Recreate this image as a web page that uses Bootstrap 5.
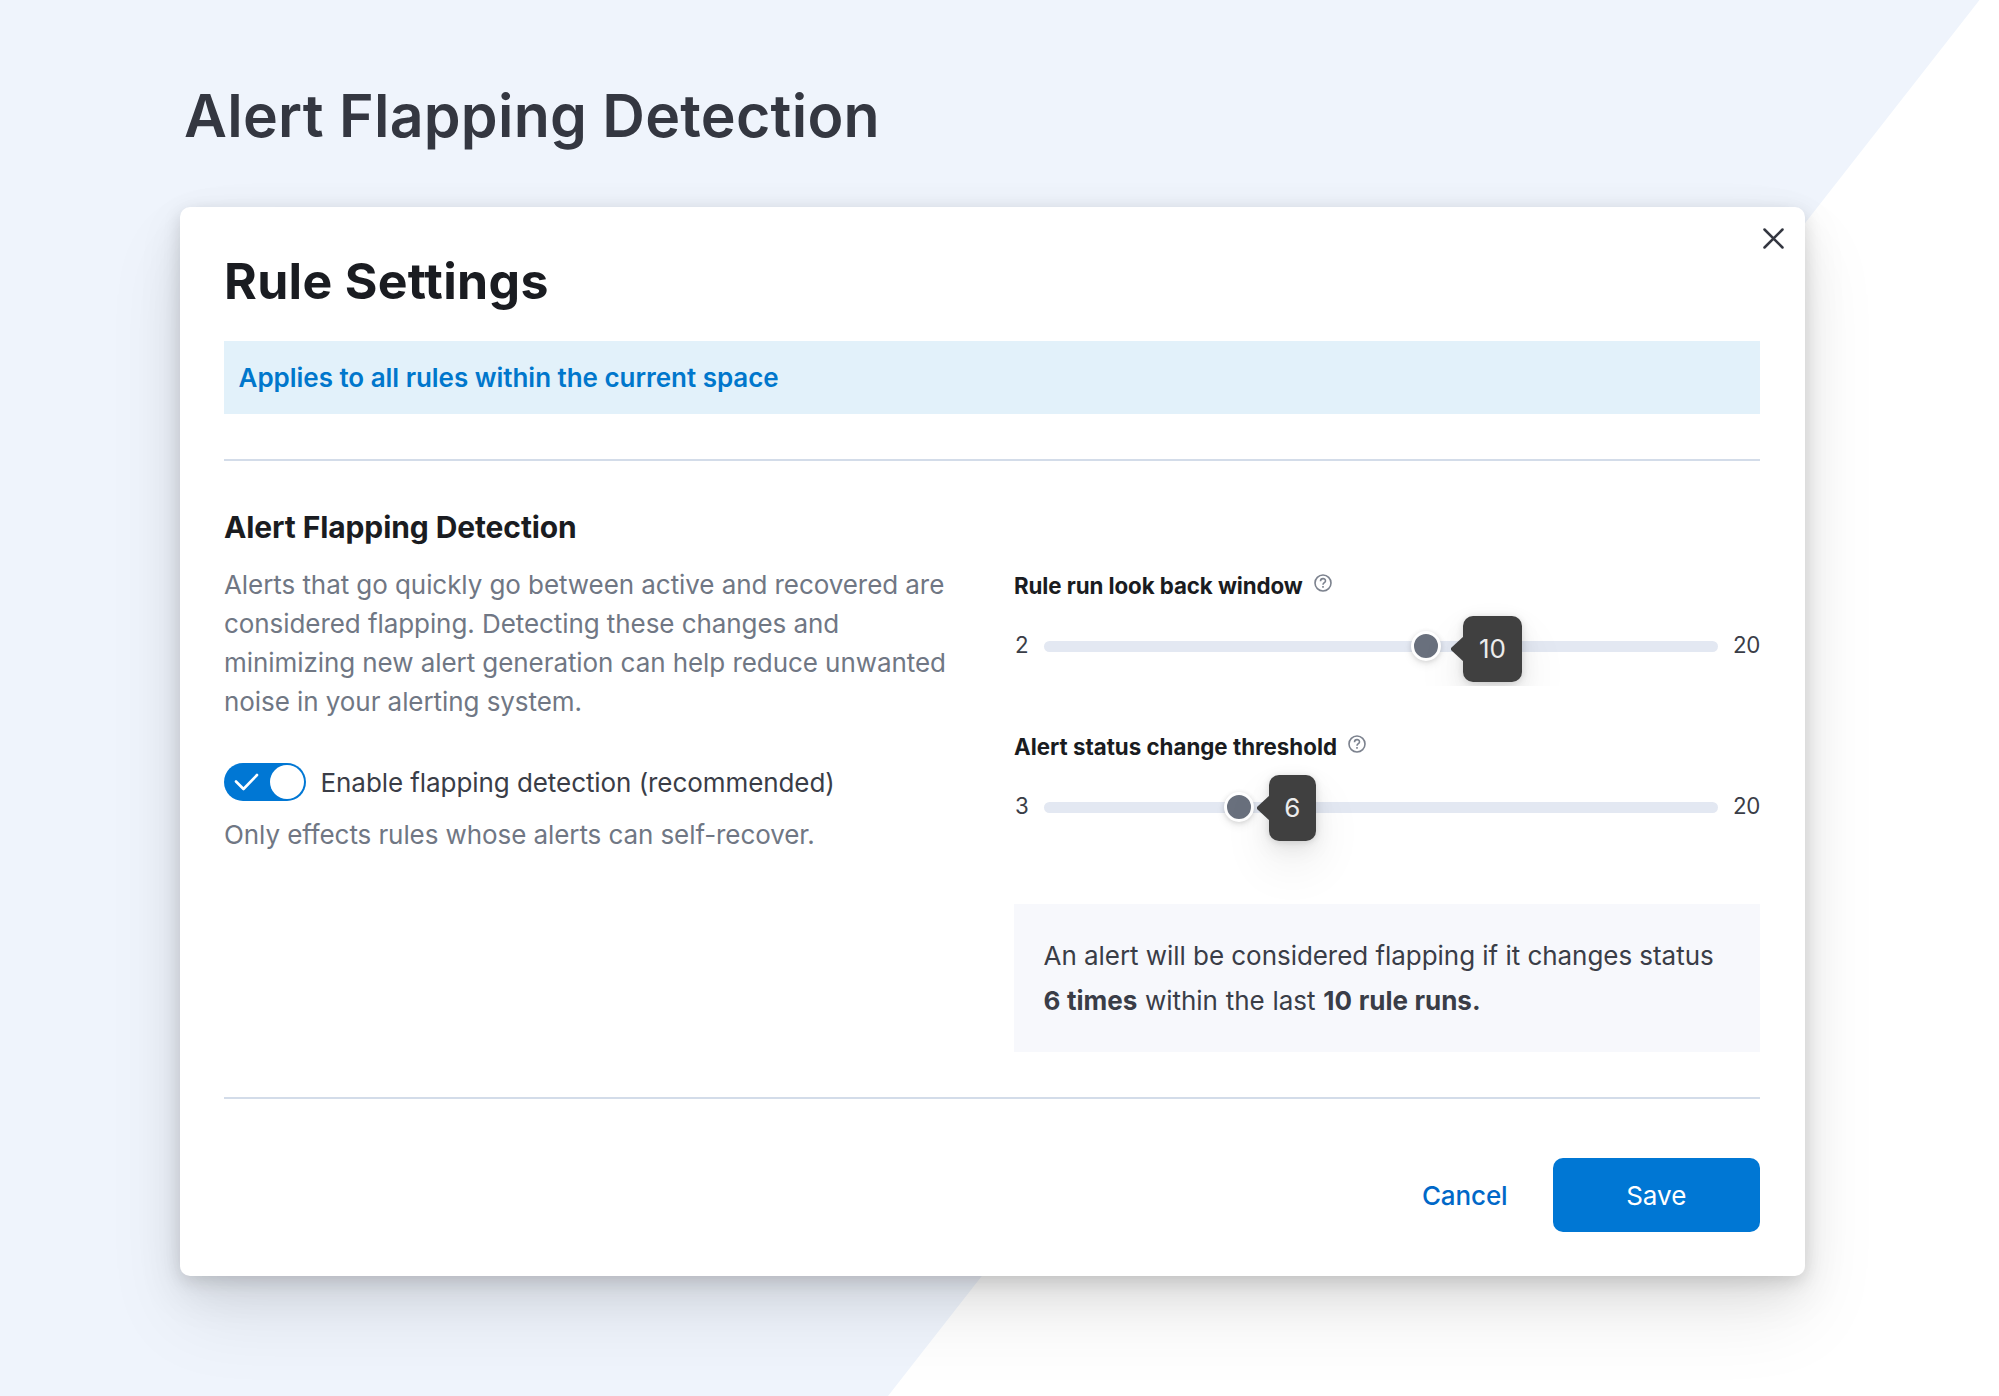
<!DOCTYPE html>
<html lang="en">
<head>
<meta charset="utf-8">
<meta name="viewport" content="width=device-width, initial-scale=1">
<title>Alert Flapping Detection</title>
<link href="https://cdn.jsdelivr.net/npm/bootstrap@5.3.0/dist/css/bootstrap.min.css" rel="stylesheet">
<style>
  body { font-family: Inter, "Liberation Sans", sans-serif; font-size: 26px; line-height: 39px; color: #3a3d47; background: #fff; }
  .backdrop { height: 1396px; padding: 80px 194.5px 0 179.5px; overflow: hidden; position: relative; isolation: isolate; }
  .backdrop::before { content: ""; position: absolute; inset: 0; z-index: -1; background: #eff4fc; clip-path: polygon(0 0, 1979.5px 0, 888px 100%, 0 100%); }
  .page-title { font-size: 59px; font-weight: 600; line-height: 72px; letter-spacing: .26px; margin: 0 0 55px 4.5px; color: #343741; }
  .modal-card { height: 1069px; padding: 44px 44.5px 0 44.500px; border: 0; border-radius: 10px;
    box-shadow: 0 5px 17px rgba(0,0,0,.13), 0 17px 45px rgba(0,0,0,.09), 0 40px 80px rgba(0,0,0,.08); }
  .close-btn { position: absolute; top: 21px; right: 21px; width: 21px; height: 21px; padding: 0; border: 0; background: none; line-height: 0; }
  .modal-heading { font-size: 50px; font-weight: 700; line-height: 61px; letter-spacing: .3px; margin: 0 0 28.500px; color: #1a1c21; }
  .space-banner { height: 73.500px; padding: 0 14.500px; margin-bottom: 45px; background: #e2f1fa; color: #0077cc; font-weight: 600; letter-spacing: -.03px; }
  .rule-line { height: 2px; background: #d3dce9; }
  .left-col { width: 745px; padding-top: 48px; letter-spacing: -.07px; }
  .right-col { width: 746px; }
  .section-title { font-size: 30px; font-weight: 700; line-height: 36px; letter-spacing: -.1px; margin: 0 0 20px; color: #1a1c21; }
  .subdued { color: #707784; }
  .toggle-line { margin-top: 41.500px; }
  .toggle { width: 81.5px; height: 38px; border-radius: 19px; background: #0077d4; padding: 2px 2px; margin-right: 15px; }
  .toggle-knob { width: 34px; height: 34px; border-radius: 50%; background: #fff; }
  .toggle-note { margin: 13px 0 0; letter-spacing: -.085px; }
  .field { position: relative; background: #fff; }
  .field-one { padding-top: 107.5px; height: 225px; }
  .field-two { padding-top: 43.5px; height: 218px; }
  .field-label { font-size: 22.3px; font-weight: 700; line-height: 34px; color: #1a1c21; margin-bottom: 27px; }
  .field-one .field-label { letter-spacing: -.08px; }
  .field-label svg { margin: -6px 0 0 11px; }
  .slider-row { height: 34px; font-size: 22.3px; line-height: 30px; }
  .slider-row > span { height: 34px; }
  .min-val { width: 29.500px; padding-left: 1px; }
  .max-val { width: 42px; text-align: right; letter-spacing: -.3px; }
  .slider-track { height: 11.5px; border-radius: 6px; background: #e3e8f2; position: relative; }
  .slider-knob { position: absolute; top: 50%; width: 30px; height: 30px; margin: -16px 0 0 -15px; border: 3.5px solid #fff; border-radius: 50%;
    background: #69707d; box-shadow: 0 1px 5px rgba(0,0,0,.13), 0 4px 10px rgba(0,0,0,.07); }
  .tip { position: absolute; top: 50%; height: 66px; border-radius: 10px; background: #404040; color: #ececec; font-size: 26px; line-height: 66px; text-align: center;
    box-shadow: 0 1px 7px rgba(0,0,0,.13), 0 7px 20px rgba(0,0,0,.08), 0 24px 50px rgba(0,0,0,.08); }
  .tip::before { content: ""; position: absolute; left: -12px; top: 20px; width: 13px; height: 26px; background: #404040; clip-path: polygon(100% 0, 100% 100%, 0 54%, 0 46%); }
  .summary { height: 148px; padding: 30px 29.5px; background: #f7f8fc; line-height: 44.6px; letter-spacing: -.045px; position: relative; }
  .summary-second { word-spacing: .6px; }
  .lower-line { margin-top: 44.5px; }
  .footer-row { padding-top: 59px; }
  .save-btn, .cancel-btn { font-size: 26px; line-height: 39px; border: 0; padding: 1px 0 0; height: 74.500px; }
  .save-btn { width: 207.5px; border-radius: 10px; background: #0077d4; color: #fff; }
  .cancel-btn { color: #0068c8; margin-right: 45px; font-weight: 500; letter-spacing: -.12px; }
</style>
</head>
<body>
<main class="backdrop">
  <h1 class="page-title">Alert Flapping Detection</h1>
  <section class="card modal-card">
    <button class="close-btn" aria-label="Close"><svg width="21" height="21" viewBox="0 0 21 21" fill="none" stroke="#343741" stroke-width="2.5" stroke-linecap="round"><path d="M1.500 1.500l18 18M19.500 1.500l-18 18"/></svg></button>
    <h2 class="modal-heading">Rule Settings</h2>
    <div class="space-banner d-flex align-items-center">Applies to all rules within the current space</div>
    <div class="rule-line"></div>
    <div class="d-flex justify-content-between">
      <div class="left-col">
        <h3 class="section-title">Alert Flapping Detection</h3>
        <p class="subdued mb-0">Alerts that go quickly go between active and recovered are<br>considered flapping. Detecting these changes and<br>minimizing new alert generation can help reduce unwanted<br>noise in your alerting system.</p>
        <div class="toggle-line d-flex align-items-center">
          <span class="toggle d-flex align-items-center justify-content-between">
            <svg class="ms-2" width="26" height="20" viewBox="0 0 26 20" fill="none" stroke="#fff" stroke-width="2.600" stroke-linecap="round" stroke-linejoin="round"><path d="M2 9.500l7.500 7.500L23 3"/></svg>
            <span class="toggle-knob"></span>
          </span>
          <span>Enable flapping detection (recommended)</span>
        </div>
        <p class="subdued toggle-note">Only effects rules whose alerts can self-recover.</p>
      </div>
      <div class="right-col">
        <div class="field field-one">
          <div class="field-label d-flex align-items-center">Rule run look back window
            <svg width="18" height="18" viewBox="0 0 18 18" fill="none" stroke="#7c828e" stroke-width="1.600"><circle cx="9" cy="9" r="8"/><path d="M6.500 7.200c0-3.400 5-3.300 5-.3 0 1.900-2.500 1.700-2.500 3.900M9 12v1.700"/></svg>
          </div>
          <div class="slider-row d-flex align-items-center">
            <span class="min-val">2</span>
            <div class="slider-track flex-grow-1"><span class="slider-knob" style="left:382px"></span><div class="tip" style="left:419.5px;width:59px;margin-top:-30.5px">10</div></div>
            <span class="max-val">20</span>
          </div>
        </div>
        <div class="field field-two">
          <div class="field-label d-flex align-items-center">Alert status change threshold
            <svg width="18" height="18" viewBox="0 0 18 18" fill="none" stroke="#7c828e" stroke-width="1.600"><circle cx="9" cy="9" r="8"/><path d="M6.500 7.200c0-3.400 5-3.300 5-.3 0 1.900-2.500 1.700-2.500 3.900M9 12v1.700"/></svg>
          </div>
          <div class="slider-row d-flex align-items-center">
            <span class="min-val">3</span>
            <div class="slider-track flex-grow-1"><span class="slider-knob" style="left:195.5px"></span><div class="tip" style="left:225.5px;width:46.500px;margin-top:-32.5px">6</div></div>
            <span class="max-val">20</span>
          </div>
        </div>
        <div class="summary">An alert will be considered flapping if it changes status<br><span class="summary-second"><b>6 times</b> within the last <b>10 rule runs.</b></span></div>
      </div>
    </div>
    <div class="rule-line lower-line"></div>
    <div class="footer-row d-flex justify-content-end align-items-center">
      <button class="btn btn-link text-decoration-none cancel-btn">Cancel</button>
      <button class="btn save-btn">Save</button>
    </div>
  </section>
</main>
<script src="https://cdn.jsdelivr.net/npm/bootstrap@5.3.0/dist/js/bootstrap.bundle.min.js"></script>
</body>
</html>
